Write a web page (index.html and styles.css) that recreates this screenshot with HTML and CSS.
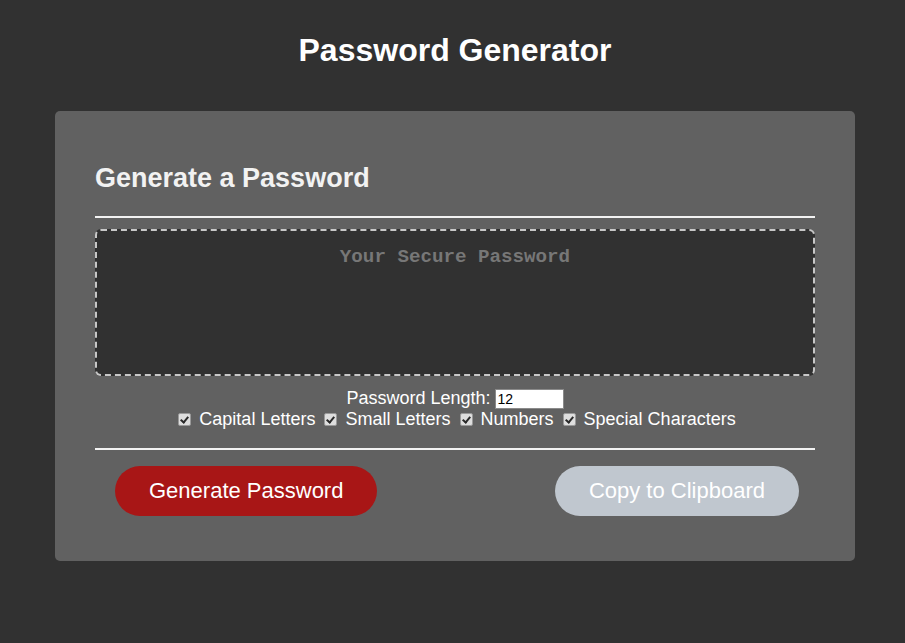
FILE: index.html
```html
<!DOCTYPE html>
<html lang="en">
<head>
<meta charset="utf-8">
<title>Password Generator</title>
<link rel="stylesheet" href="styles.css">
</head>
<body>
<div class="wrapper">
  <header class="page-header">
    <h1 class="title">Password Generator</h1>
  </header>
  <div class="card">
    <div class="card-header">
      <h2 class="card-title">Generate a Password</h2>
    </div>
    <div class="card-body">
      <textarea class="password-box" readonly placeholder="Your Secure Password" aria-label="Generated Password"></textarea>
      <div class="options">
        <div class="length-row">
          <label for="len">Password Length:</label> <input id="len" class="length-input" type="text" value="12">
        </div>
        <div class="check-row">
          <input class="check" type="checkbox" checked id="c1"> <label for="c1">Capital Letters</label>
          <input class="check" type="checkbox" checked id="c2"> <label for="c2">Small Letters</label>
          <input class="check" type="checkbox" checked id="c3"> <label for="c3">Numbers</label>
          <input class="check" type="checkbox" checked id="c4"> <label for="c4">Special Characters</label>
        </div>
      </div>
    </div>
    <div class="card-footer">
      <button class="btn btn-generate" type="button">Generate Password</button>
      <button class="btn btn-copy" type="button">Copy to Clipboard</button>
    </div>
  </div>
</div>
</body>
</html>
```

FILE: styles.css
```css
* {
  box-sizing: border-box;
}

html, body {
  margin: 0;
  padding: 0;
  background: #313131;
}

body {
  font-family: "Liberation Sans", Arial, sans-serif;
  color: #ffffff;
  padding-left: 5px;
  min-height: 643px;
}

.wrapper {
  width: 800px;
  margin: 0 auto;
}

.page-header {
  padding-top: 32px;
}

.title {
  margin: 0;
  text-align: center;
  font-size: 32px;
  line-height: 37px;
  font-weight: bold;
  color: #ffffff;
}

.card {
  margin-top: 42px;
  background: #616161;
  border-radius: 5px;
  padding: 40px 40px 45px;
}

.card-header {
  padding-top: 12px;
  border-bottom: 2px solid #f2f2f2;
  padding-bottom: 22px;
}

.card-title {
  margin: 0;
  font-size: 27px;
  line-height: 31px;
  font-weight: bold;
  color: #f2f2f2;
}

.card-body {
  padding-top: 11px;
  padding-bottom: 18px;
  border-bottom: 2px solid #f2f2f2;
}

.password-box {
  display: block;
  width: 100%;
  height: 147px;
  margin: 0;
  resize: none;
  background: #313131;
  border: 2px dashed #c8c8c8;
  border-radius: 6px;
  padding: 15px 10px;
  font-family: "Liberation Mono", "Courier New", monospace;
  font-size: 19.2px;
  line-height: 22px;
  font-weight: bold;
  text-align: center;
  color: #ffffff;
  outline: none;
}

.password-box::placeholder {
  color: #777777;
}

.options {
  margin-top: 12px;
  text-align: center;
  font-size: 18px;
  line-height: 21px;
  color: #ffffff;
}

.length-row {
  height: 21px;
}

.length-input {
  width: 69px;
  height: 20px;
  margin: 1px 0 0 -1px;
  padding: 1px 2px;
  border: 1px solid #8a8a8a;
  background: #ffffff;
  color: #000000;
  font-family: "Liberation Sans", Arial, sans-serif;
  font-size: 14px;
  vertical-align: top;
}

.check-row {
  height: 21px;
}

.check {
  appearance: none;
  -webkit-appearance: none;
  position: relative;
  width: 13px;
  height: 13px;
  margin: 0 3px 0 4px;
  border: 1px solid #9a9a9a;
  border-radius: 2px;
  background: #dedede;
  vertical-align: -1px;
}

.check::after {
  content: "";
  position: absolute;
  left: 3px;
  top: 1px;
  width: 3px;
  height: 6px;
  border: solid #2a2a2a;
  border-width: 0 2px 2px 0;
  transform: rotate(40deg);
}

.card-footer {
  display: flex;
  justify-content: space-between;
  padding: 16px 16px 0 20px;
}

.btn {
  border: none;
  border-radius: 25px;
  padding: 14px 34px;
  font-family: "Liberation Sans", Arial, sans-serif;
  font-size: 22px;
  line-height: 22px;
  color: #ffffff;
  cursor: pointer;
}

.btn-generate {
  background: #a81616;
}

.btn-copy {
  background: #c0c7cf;
}
```
